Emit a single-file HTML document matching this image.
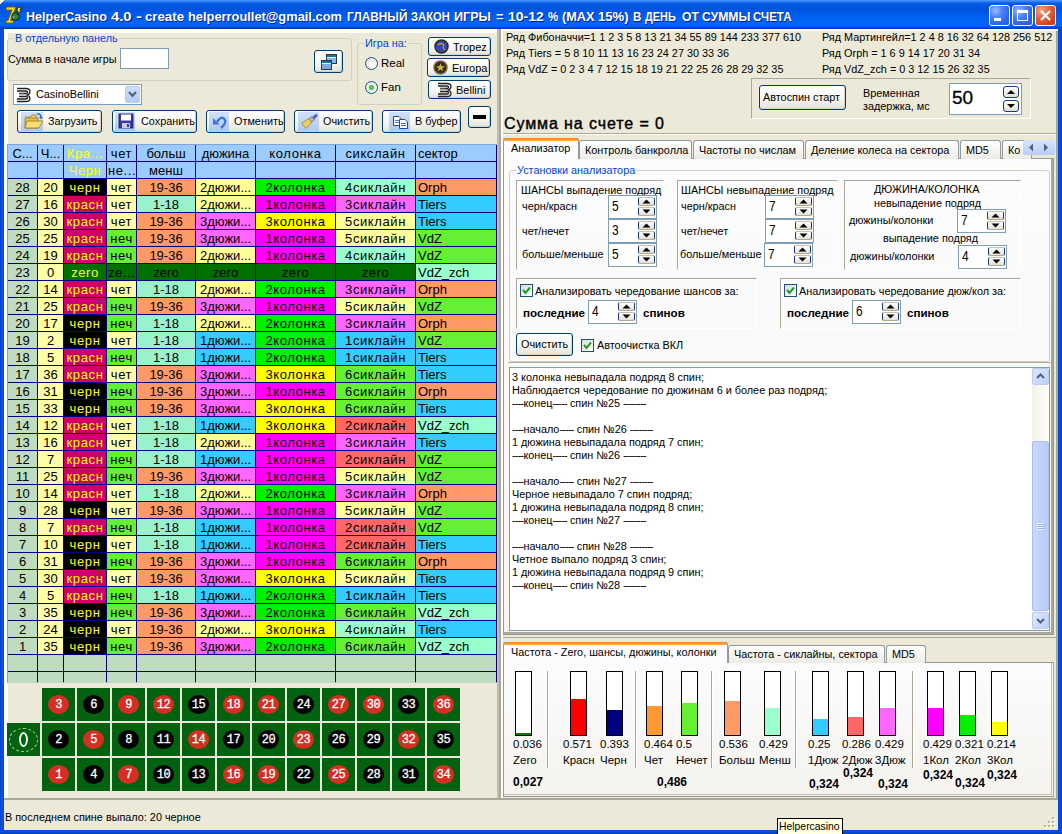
<!DOCTYPE html>
<html><head><meta charset="utf-8"><style>
*{box-sizing:border-box;margin:0;padding:0}
html,body{width:1062px;height:834px;overflow:hidden;background:#ECE9D8;font-family:"Liberation Sans",sans-serif;font-size:10.85px;color:#000}
.a{position:absolute}
.t{position:absolute;white-space:nowrap;line-height:13px}
.xpbtn{position:absolute;border:1px solid #003C74;border-radius:3px;background:linear-gradient(#FFFFFF 0%,#F5F4EF 60%,#E3E1D6 100%);box-shadow:inset -1px -1px 0 #D6D0C5}
.edit{position:absolute;border:1px solid #7F9DB9;background:#fff}
.grp{position:absolute;border:1px solid #D0D0BF;border-radius:3px}
.gl{position:absolute;white-space:nowrap;color:#0046D5;background:#ECE9D8;padding:0 1px;line-height:13px}
.spin{position:absolute;border:1px solid #7F9DB9;background:#fff}
.spin .n{position:absolute;left:3px;top:3px;font-size:14px;line-height:15px;transform:scaleX(0.85);transform-origin:0 0}
.sb{position:absolute;width:16px;height:8px;border:1px solid #1B3A80;border-top-color:#C8C0A8;border-bottom-color:#B0A890;border-radius:2px;background:linear-gradient(#FFFFFF,#E2E0D6)}
.sb i{position:absolute;left:4px;width:0;height:0;border-left:3px solid transparent;border-right:3px solid transparent}
.bevel{position:absolute;border-top:1px solid #ACA899;border-left:1px solid #ACA899;border-right:1px solid #fff;border-bottom:1px solid #fff}
.cb{position:absolute;width:13px;height:13px;border:1px solid #1C5180;background:linear-gradient(135deg,#DCDCD7,#FFFFFF)}
.g{position:absolute;overflow:hidden;white-space:nowrap;font-size:13px;line-height:16px;height:16px;padding-top:1px}
.ls{letter-spacing:0.6px}
.bar{position:absolute;width:17px;height:65px;border:1px solid #000;background:#fff}
.bar i{position:absolute;left:0;right:0;bottom:0}
.rc{position:absolute;width:33px;height:33px;background:#02620F}
.rc b{position:absolute;left:6px;top:7px;width:21px;height:19px;border-radius:50%;color:#fff;font-family:"Liberation Mono",monospace;font-size:12px;font-weight:normal;line-height:20px;text-align:center;letter-spacing:-0.5px;-webkit-text-stroke:0.3px #fff}
</style></head><body>
<div class="a" style="left:0;top:0;width:1062px;height:29px;background:linear-gradient(#4A98FF 0px,#3B8AF8 1px,#1668EE 2.5px,#0058E4 4px,#0053DA 8px,#0058E6 12px,#0061F2 18px,#0066F8 24px,#0062F2 26px,#0048D0 27.5px,#003AB8 29px)"></div>
<div class="a" style="left:0;top:0;width:6px;height:6px;background:linear-gradient(135deg,#fff 0,#fff 40%,transparent 41%)"></div>
<div class="a" style="left:0;top:29px;width:4px;height:805px;background:linear-gradient(90deg,#0032C0,#0054E3 1px,#0058EE 2px,#0047D6)"></div>
<div class="a" style="left:1058px;top:29px;width:4px;height:805px;background:linear-gradient(90deg,#0047D6,#0054E3 2px,#0040C0)"></div>
<div class="a" style="left:0;top:830px;width:1062px;height:4px;background:linear-gradient(#0047D6,#0054E3 2px,#0036B0)"></div>
<svg class="a" style="left:5px;top:5px" width="20" height="20" viewBox="0 0 20 20">
<path d="M1.5 2 H10.5 L10 4.5 L5.5 15.5 H8.5 L8 18 H1 L1.5 15.5 H3 L7 5 H1 Z" fill="#F2E010" stroke="#8A5A00" stroke-width="0.9"/>
<circle cx="10.5" cy="11.5" r="3.8" fill="#1E9030" stroke="#1A1A1A" stroke-width="1"/>
<path d="M7.5 11 L10 12 L8 14 Z" fill="#B0A0B0"/>
<path d="M13 2 L16.5 2.5 L14.8 5 L16.5 5.2 L12 9.5 L13.2 6.3 L11.6 6.2 Z" fill="#FFF000" stroke="#111" stroke-width="0.8"/>
</svg>
<div class="t" style="left:25.5px;top:8px;color:#fff;font-weight:bold;font-size:13.5px;line-height:17px;text-shadow:1px 1px 0 #0A1E8C;transform:scaleX(0.930);transform-origin:0 0">HelperCasino</div>
<div class="t" style="left:110.5px;top:8px;color:#fff;font-weight:bold;font-size:13.5px;line-height:17px;text-shadow:1px 1px 0 #0A1E8C;transform:scaleX(1.096);transform-origin:0 0">4.0</div>
<div class="t" style="left:135.5px;top:8px;color:#fff;font-weight:bold;font-size:13.5px;line-height:17px;text-shadow:1px 1px 0 #0A1E8C;transform:scaleX(1.299);transform-origin:0 0">-</div>
<div class="t" style="left:144.5px;top:8px;color:#fff;font-weight:bold;font-size:13.5px;line-height:17px;text-shadow:1px 1px 0 #0A1E8C;transform:scaleX(0.980);transform-origin:0 0">create</div>
<div class="t" style="left:187.5px;top:8px;color:#fff;font-weight:bold;font-size:13.5px;line-height:17px;text-shadow:1px 1px 0 #0A1E8C;transform:scaleX(0.952);transform-origin:0 0">helperroullet@gmail.com</div>
<div class="t" style="left:346.5px;top:8px;color:#fff;font-weight:bold;font-size:13.5px;line-height:17px;text-shadow:1px 1px 0 #0A1E8C;transform:scaleX(0.876);transform-origin:0 0">ГЛАВНЫЙ</div>
<div class="t" style="left:410.5px;top:8px;color:#fff;font-weight:bold;font-size:13.5px;line-height:17px;text-shadow:1px 1px 0 #0A1E8C;transform:scaleX(0.831);transform-origin:0 0">ЗАКОН</div>
<div class="t" style="left:454.0px;top:8px;color:#fff;font-weight:bold;font-size:13.5px;line-height:17px;text-shadow:1px 1px 0 #0A1E8C;transform:scaleX(0.933);transform-origin:0 0">ИГРЫ</div>
<div class="t" style="left:495.5px;top:8px;color:#fff;font-weight:bold;font-size:13.5px;line-height:17px;text-shadow:1px 1px 0 #0A1E8C;transform:scaleX(0.943);transform-origin:0 0">=</div>
<div class="t" style="left:507.5px;top:8px;color:#fff;font-weight:bold;font-size:13.5px;line-height:17px;text-shadow:1px 1px 0 #0A1E8C;transform:scaleX(1.037);transform-origin:0 0">10-12</div>
<div class="t" style="left:547.5px;top:8px;color:#fff;font-weight:bold;font-size:13.5px;line-height:17px;text-shadow:1px 1px 0 #0A1E8C;transform:scaleX(0.860);transform-origin:0 0">%</div>
<div class="t" style="left:561.5px;top:8px;color:#fff;font-weight:bold;font-size:13.5px;line-height:17px;text-shadow:1px 1px 0 #0A1E8C;transform:scaleX(0.944);transform-origin:0 0">(MAX</div>
<div class="t" style="left:597.5px;top:8px;color:#fff;font-weight:bold;font-size:13.5px;line-height:17px;text-shadow:1px 1px 0 #0A1E8C;transform:scaleX(0.972);transform-origin:0 0">15%)</div>
<div class="t" style="left:632.5px;top:8px;color:#fff;font-weight:bold;font-size:13.5px;line-height:17px;text-shadow:1px 1px 0 #0A1E8C;transform:scaleX(0.856);transform-origin:0 0">В</div>
<div class="t" style="left:644.5px;top:8px;color:#fff;font-weight:bold;font-size:13.5px;line-height:17px;text-shadow:1px 1px 0 #0A1E8C;transform:scaleX(0.808);transform-origin:0 0">ДЕНЬ</div>
<div class="t" style="left:681.5px;top:8px;color:#fff;font-weight:bold;font-size:13.5px;line-height:17px;text-shadow:1px 1px 0 #0A1E8C;transform:scaleX(0.899);transform-origin:0 0">ОТ</div>
<div class="t" style="left:702.0px;top:8px;color:#fff;font-weight:bold;font-size:13.5px;line-height:17px;text-shadow:1px 1px 0 #0A1E8C;transform:scaleX(0.902);transform-origin:0 0">СУММЫ</div>
<div class="t" style="left:753.2px;top:8px;color:#fff;font-weight:bold;font-size:13.5px;line-height:17px;text-shadow:1px 1px 0 #0A1E8C;transform:scaleX(0.855);transform-origin:0 0">СЧЕТА</div>
<div class="a" style="left:989px;top:5px;width:21px;height:21px;border:1px solid #fff;border-radius:3px;background:radial-gradient(circle at 30% 25%,#9CBAFF 0,#4C82F8 35%,#2E64EE 70%,#2656DC 100%)"><div class="a" style="left:4px;top:12px;width:7px;height:3px;background:#fff"></div></div>
<div class="a" style="left:1012px;top:5px;width:21px;height:21px;border:1px solid #fff;border-radius:3px;background:radial-gradient(circle at 30% 25%,#9CBAFF 0,#4C82F8 35%,#2E64EE 70%,#2656DC 100%)"><div class="a" style="left:4px;top:4px;width:11px;height:11px;border:1px solid #fff;border-top-width:3px"></div></div>
<div class="a" style="left:1035px;top:5px;width:21px;height:21px;border:1px solid #fff;border-radius:3px;background:radial-gradient(circle at 30% 25%,#F4A58C 0,#E86A45 35%,#D6461E 70%,#C23A14 100%)"><svg class="a" style="left:3px;top:3px" width="13" height="13"><path d="M2 2 L11 11 M11 2 L2 11" stroke="#fff" stroke-width="2.2"/></svg></div>
<div class="a" style="left:4px;top:29px;width:497px;height:4px;background:#fff"></div><div class="a" style="left:501px;top:29px;width:557px;height:2px;background:#fff"></div>
<div class="a" style="left:4px;top:800px;width:1054px;height:30px;background:#ECE9D8"></div>
<div class="t" style="left:5px;top:811px">В последнем спине выпало: 20 черное</div>
<svg class="a" style="left:1043px;top:816px" width="12" height="12"><rect x="10" y="10" width="2" height="2" fill="#fff"/><rect x="9" y="9" width="2" height="2" fill="#B8B4A2"/><rect x="6" y="10" width="2" height="2" fill="#fff"/><rect x="5" y="9" width="2" height="2" fill="#B8B4A2"/><rect x="2" y="10" width="2" height="2" fill="#fff"/><rect x="1" y="9" width="2" height="2" fill="#B8B4A2"/><rect x="10" y="6" width="2" height="2" fill="#fff"/><rect x="9" y="5" width="2" height="2" fill="#B8B4A2"/><rect x="6" y="6" width="2" height="2" fill="#fff"/><rect x="5" y="5" width="2" height="2" fill="#B8B4A2"/><rect x="10" y="2" width="2" height="2" fill="#fff"/><rect x="9" y="1" width="2" height="2" fill="#B8B4A2"/></svg>
<div class="a" style="left:777px;top:818px;width:66px;height:20px;background:#FFFFE1;border:1px solid #000"></div>
<div class="t" style="left:779px;top:820px;font-size:10.4px">Helpercasino</div>
<div class="a" style="left:4px;top:29px;width:4px;height:769px;background:#fff"></div>
<div class="grp" style="left:7px;top:38px;width:345px;height:43px"></div>
<div class="gl" style="left:14px;top:32px;background:linear-gradient(transparent 1px,#ECE9D8 1px)">В отдельную панель</div>
<div class="t" style="left:8px;top:53px">Сумма в начале игры</div>
<div class="edit" style="left:120px;top:48px;width:49px;height:21px"></div>
<div class="xpbtn" style="left:314px;top:50px;width:29px;height:23px"></div>
<svg class="a" style="left:320px;top:53px" width="20" height="18" viewBox="0 0 20 18"><rect x="6.5" y="1.5" width="10" height="9" fill="#8AB4E8" stroke="#283848"/><rect x="7" y="2" width="9" height="2" fill="#1474A8"/><rect x="7" y="4" width="9" height="1" fill="#E8F4FF"/><rect x="1.5" y="7.5" width="10" height="9" fill="#7AA8E4" stroke="#283848"/><rect x="2" y="8" width="9" height="2" fill="#1474A8"/><rect x="2" y="10" width="9" height="1" fill="#E8F4FF"/></svg>
<div class="edit" style="left:13px;top:84px;width:129px;height:21px"></div>
<div class="a" style="left:16px;top:87px"><svg width="16" height="16" viewBox="0 0 16 16"><path d="M1 1.5 H10 Q14 1.5 14 4.5 Q14 7 11 8 Q14 9 14 11.5 Q14 14.5 10 14.5 H1" fill="none" stroke="#222" stroke-width="1.3"/><path d="M1 4 H10 Q11.5 4 11.5 5 Q11.5 6.5 10 6.5 H3 M3 9.5 H10 Q11.5 9.5 11.5 11 Q11.5 12 10 12 H1" fill="none" stroke="#222" stroke-width="1.3"/><path d="M3 7 H8" stroke="#888" stroke-width="1"/></svg></div>
<div class="t" style="left:36px;top:88px">CasinoBellini</div>
<div class="a" style="left:125px;top:86px;width:15px;height:17px;border-radius:2px;background:linear-gradient(#CFDDFB,#B6CCF6);border:1px solid #B8CCF0"></div>
<svg class="a" style="left:128px;top:91px" width="9" height="7"><path d="M1 1 L4.5 5 L8 1" fill="none" stroke="#4D6185" stroke-width="2"/></svg>
<div class="grp" style="left:357px;top:43px;width:65px;height:62px"></div>
<div class="gl" style="left:364px;top:37px">Игра на:</div>
<div class="a" style="left:365px;top:57px;width:13px;height:13px;border-radius:50%;border:1px solid #1C5180;background:radial-gradient(circle at 65% 65%,#FFFFFF,#DCDCD7)"></div>
<div class="t" style="left:381px;top:57px;font-size:11.5px">Real</div>
<div class="a" style="left:365px;top:81px;width:13px;height:13px;border-radius:50%;border:1px solid #1C5180;background:radial-gradient(circle at 65% 65%,#FFFFFF,#DCDCD7)"></div>
<div class="a" style="left:369px;top:85px;width:5px;height:5px;border-radius:50%;background:radial-gradient(#5BE65B,#1E9A1E)"></div>
<div class="t" style="left:381px;top:81px;font-size:11.5px">Fan</div>
<div class="xpbtn" style="left:428px;top:37px;width:63px;height:19px"></div>
<div class="a" style="left:434px;top:39px"><svg width="15" height="15"><circle cx="7.5" cy="7.5" r="6.5" fill="#3848A8" stroke="#2A2A2A" stroke-width="1.5"/><path d="M4 6 Q7 3 10 6 Q8 9 11 11" fill="none" stroke="#B8A040" stroke-width="1.2"/></svg></div>
<div class="t" style="left:453px;top:41px;font-size:11px">Tropez</div>
<div class="xpbtn" style="left:427px;top:58px;width:63px;height:19px"></div>
<div class="a" style="left:433px;top:60px"><svg width="15" height="15"><circle cx="7.5" cy="7.5" r="6.5" fill="#2A2A2A" stroke="#8A6A20" stroke-width="1.5"/><path d="M7.5 3 L8.7 6.3 L12 6.3 L9.3 8.4 L10.3 11.6 L7.5 9.6 L4.7 11.6 L5.7 8.4 L3 6.3 L6.3 6.3 Z" fill="#D8B030"/></svg></div>
<div class="t" style="left:452px;top:62px;font-size:11px">Europa</div>
<div class="xpbtn" style="left:428px;top:80px;width:63px;height:19px"></div>
<div class="a" style="left:437px;top:82px"><svg width="16" height="16" viewBox="0 0 16 16"><path d="M1 1.5 H10 Q14 1.5 14 4.5 Q14 7 11 8 Q14 9 14 11.5 Q14 14.5 10 14.5 H1" fill="none" stroke="#222" stroke-width="1.3"/><path d="M1 4 H10 Q11.5 4 11.5 5 Q11.5 6.5 10 6.5 H3 M3 9.5 H10 Q11.5 9.5 11.5 11 Q11.5 12 10 12 H1" fill="none" stroke="#222" stroke-width="1.3"/><path d="M3 7 H8" stroke="#888" stroke-width="1"/></svg></div>
<div class="t" style="left:456px;top:84px;font-size:11px">Bellini</div>
<div class="xpbtn" style="left:17px;top:110px;width:85px;height:23px"></div>
<div class="a" style="left:21px;top:112px;width:22px;height:19px;background:linear-gradient(#D0E0F8,#B0C8F0)"></div>
<div class="a" style="left:24px;top:112px"><svg width="20" height="18" viewBox="0 0 20 18"><path d="M1 5 H7 L8 3 H12 L12 6" fill="#F0D070" stroke="#9A7A20" stroke-width="0.8"/><path d="M1 6 H14 V16 H1 Z" fill="#E8C04A" stroke="#9A7A20" stroke-width="0.8"/><path d="M3 9 H19 L15 16 H1 Z" fill="#F8DA78" stroke="#9A7A20" stroke-width="0.8"/><path d="M13 2 Q17 1 17 6" fill="none" stroke="#2A5CC8" stroke-width="1.3"/><path d="M15 5 L17 7 L19 5" fill="#2A5CC8"/></svg></div>
<div class="t" style="left:48px;top:115px">Загрузить</div>
<div class="xpbtn" style="left:112px;top:110px;width:85px;height:23px"></div>
<div class="a" style="left:115px;top:112px;width:20px;height:19px;background:linear-gradient(#D0E0F8,#B0C8F0)"></div>
<div class="a" style="left:117px;top:112px"><svg width="18" height="18" viewBox="0 0 18 18"><rect x="2" y="2" width="14" height="14" fill="#3A3AA0" stroke="#1A1A60" stroke-width="0.8"/><rect x="4" y="2.5" width="10" height="6" fill="#fff"/><rect x="5" y="11" width="8" height="5" fill="#C8C8D8"/><rect x="10" y="12" width="2" height="3" fill="#3A3AA0"/></svg></div>
<div class="t" style="left:141px;top:115px">Сохранить</div>
<div class="xpbtn" style="left:206px;top:110px;width:79px;height:23px"></div>
<div class="a" style="left:209px;top:112px;width:20px;height:19px;background:linear-gradient(#D0E0F8,#B0C8F0)"></div>
<div class="a" style="left:211px;top:112px"><svg width="18" height="18" viewBox="0 0 18 18"><path d="M6 10 Q10 3.5 13.5 7 Q16 11 10 16" fill="none" stroke="#3A74E0" stroke-width="2.4"/><path d="M2 6 L2 12.5 L8.5 12.5 Z" fill="#3A74E0"/></svg></div>
<div class="t" style="left:234px;top:115px">Отменить</div>
<div class="xpbtn" style="left:294px;top:110px;width:79px;height:23px"></div>
<div class="a" style="left:298px;top:112px;width:21px;height:19px;background:linear-gradient(#D0E0F8,#B0C8F0)"></div>
<div class="a" style="left:299px;top:112px"><svg width="20" height="18" viewBox="0 0 20 18"><path d="M17 3.5 L13.5 7" stroke="#5A5AD0" stroke-width="3" stroke-linecap="round"/><path d="M10 6.5 L13 4.5 L15.5 8 L12.5 10.5 Z" fill="#B8B8C8" stroke="#606070" stroke-width="0.6"/><path d="M2.5 11 L10 6.5 L12.5 10.5 L7 16.5 Z" fill="#E6D25A" stroke="#8A7A30" stroke-width="0.7"/></svg></div>
<div class="t" style="left:323px;top:115px">Очистить</div>
<div class="xpbtn" style="left:382px;top:110px;width:79px;height:23px"></div>
<div class="a" style="left:389px;top:112px;width:21px;height:19px;background:linear-gradient(#D0E0F8,#B0C8F0)"></div>
<div class="a" style="left:387px;top:112px"><svg width="22" height="18" viewBox="0 0 22 18"><path d="M6.5 4.5 H12 L14.5 7 V13.5 H6.5 Z" fill="#fff" stroke="#404858" stroke-width="1"/><path d="M8 8.5 H13 M8 10.5 H13" stroke="#4A80D0" stroke-width="1"/><path d="M12.5 7.5 H18 L20.5 10 V16.5 H12.5 Z" fill="#fff" stroke="#1A48B0" stroke-width="1"/><path d="M14 11.5 H19 M14 13.5 H19" stroke="#3A70D0" stroke-width="1.2"/></svg></div>
<div class="t" style="left:415px;top:115px">В буфер</div>
<div class="xpbtn" style="left:468px;top:106px;width:23px;height:22px"></div>
<div class="a" style="left:473px;top:115px;width:13px;height:4px;background:#000"></div>
<div class="a" style="left:7px;top:144px;width:491px;height:539px;background:#000080;border:1px solid #7FA4DB"></div>
<div class="g" style="left:8px;top:145px;width:29px;height:16px;background:#9CCCFF;color:#000;text-align:center;padding-left:0px;">С...</div>
<div class="g" style="left:38px;top:145px;width:25px;height:16px;background:#9CCCFF;color:#000;text-align:center;padding-left:0px;">Ч...</div>
<div class="g ls" style="left:64px;top:145px;width:42px;height:16px;background:#9CCCFF;color:#FFFF00;text-align:center;padding-left:0px;">Кра...</div>
<div class="g ls" style="left:107px;top:145px;width:29px;height:16px;background:#9CCCFF;color:#000;text-align:center;padding-left:0px;">чет</div>
<div class="g" style="left:137px;top:145px;width:58px;height:16px;background:#9CCCFF;color:#000;text-align:center;padding-left:0px;">больш</div>
<div class="g" style="left:196px;top:145px;width:59px;height:16px;background:#9CCCFF;color:#000;text-align:center;padding-left:0px;">дюжина</div>
<div class="g ls" style="left:256px;top:145px;width:79px;height:16px;background:#9CCCFF;color:#000;text-align:center;padding-left:0px;">колонка</div>
<div class="g ls" style="left:336px;top:145px;width:79px;height:16px;background:#9CCCFF;color:#000;text-align:center;padding-left:0px;">сикслайн</div>
<div class="g" style="left:416px;top:145px;width:80px;height:16px;background:#9CCCFF;color:#000;text-align:left;padding-left:2px;">сектор</div>
<div class="g" style="left:8px;top:162px;width:29px;height:16px;background:#9CCCFF;color:#000;text-align:center;padding-left:0px;"></div>
<div class="g" style="left:38px;top:162px;width:25px;height:16px;background:#9CCCFF;color:#000;text-align:center;padding-left:0px;"></div>
<div class="g ls" style="left:64px;top:162px;width:42px;height:16px;background:#9CCCFF;color:#FFFF00;text-align:center;padding-left:0px;">Черн</div>
<div class="g ls" style="left:107px;top:162px;width:29px;height:16px;background:#9CCCFF;color:#000;text-align:left;padding-left:1px;">не...</div>
<div class="g" style="left:137px;top:162px;width:58px;height:16px;background:#9CCCFF;color:#000;text-align:center;padding-left:0px;">менш</div>
<div class="g" style="left:196px;top:162px;width:59px;height:16px;background:#9CCCFF;color:#000;text-align:center;padding-left:0px;"></div>
<div class="g ls" style="left:256px;top:162px;width:79px;height:16px;background:#9CCCFF;color:#000;text-align:center;padding-left:0px;"></div>
<div class="g ls" style="left:336px;top:162px;width:79px;height:16px;background:#9CCCFF;color:#000;text-align:center;padding-left:0px;"></div>
<div class="g" style="left:416px;top:162px;width:80px;height:16px;background:#9CCCFF;color:#000;text-align:center;padding-left:0px;"></div>
<div class="g" style="left:8px;top:179px;width:29px;height:16px;background:#C0DCC0;color:#000;text-align:center;padding-left:0px;">28</div>
<div class="g" style="left:38px;top:179px;width:25px;height:16px;background:#FFFFA8;color:#000;text-align:center;padding-left:0px;">20</div>
<div class="g ls" style="left:64px;top:179px;width:42px;height:16px;background:#000000;color:#FFFF00;text-align:center;padding-left:0px;">черн</div>
<div class="g ls" style="left:107px;top:179px;width:29px;height:16px;background:#FFFFA8;color:#000;text-align:center;padding-left:0px;">чет</div>
<div class="g" style="left:137px;top:179px;width:58px;height:16px;background:#FF9966;color:#000;text-align:center;padding-left:0px;">19-36</div>
<div class="g" style="left:196px;top:179px;width:59px;height:16px;background:#FFFF99;color:#000;text-align:left;padding-left:4px;">2дюжи...</div>
<div class="g ls" style="left:256px;top:179px;width:79px;height:16px;background:#00F000;color:#000;text-align:center;padding-left:0px;">2колонка</div>
<div class="g ls" style="left:336px;top:179px;width:79px;height:16px;background:#99FFCC;color:#000;text-align:center;padding-left:0px;">4сиклайн</div>
<div class="g" style="left:416px;top:179px;width:80px;height:16px;background:#FF9966;color:#000;text-align:left;padding-left:2px;">Orph</div>
<div class="g" style="left:8px;top:196px;width:29px;height:16px;background:#C0DCC0;color:#000;text-align:center;padding-left:0px;">27</div>
<div class="g" style="left:38px;top:196px;width:25px;height:16px;background:#FFFFA8;color:#000;text-align:center;padding-left:0px;">16</div>
<div class="g ls" style="left:64px;top:196px;width:42px;height:16px;background:#CC0066;color:#FFFF00;text-align:center;padding-left:0px;">красн</div>
<div class="g ls" style="left:107px;top:196px;width:29px;height:16px;background:#FFFFA8;color:#000;text-align:center;padding-left:0px;">чет</div>
<div class="g" style="left:137px;top:196px;width:58px;height:16px;background:#99F2CC;color:#000;text-align:center;padding-left:0px;">1-18</div>
<div class="g" style="left:196px;top:196px;width:59px;height:16px;background:#FFFF99;color:#000;text-align:left;padding-left:4px;">2дюжи...</div>
<div class="g ls" style="left:256px;top:196px;width:79px;height:16px;background:#FF00FF;color:#000;text-align:center;padding-left:0px;">1колонка</div>
<div class="g ls" style="left:336px;top:196px;width:79px;height:16px;background:#FF66FF;color:#000;text-align:center;padding-left:0px;">3сиклайн</div>
<div class="g" style="left:416px;top:196px;width:80px;height:16px;background:#33CCFF;color:#000;text-align:left;padding-left:2px;">Tiers</div>
<div class="g" style="left:8px;top:213px;width:29px;height:16px;background:#C0DCC0;color:#000;text-align:center;padding-left:0px;">26</div>
<div class="g" style="left:38px;top:213px;width:25px;height:16px;background:#FFFFA8;color:#000;text-align:center;padding-left:0px;">30</div>
<div class="g ls" style="left:64px;top:213px;width:42px;height:16px;background:#CC0066;color:#FFFF00;text-align:center;padding-left:0px;">красн</div>
<div class="g ls" style="left:107px;top:213px;width:29px;height:16px;background:#FFFFA8;color:#000;text-align:center;padding-left:0px;">чет</div>
<div class="g" style="left:137px;top:213px;width:58px;height:16px;background:#FF9966;color:#000;text-align:center;padding-left:0px;">19-36</div>
<div class="g" style="left:196px;top:213px;width:59px;height:16px;background:#FF66FF;color:#000;text-align:left;padding-left:4px;">3дюжи...</div>
<div class="g ls" style="left:256px;top:213px;width:79px;height:16px;background:#FFFF00;color:#000;text-align:center;padding-left:0px;">3колонка</div>
<div class="g ls" style="left:336px;top:213px;width:79px;height:16px;background:#FFFF99;color:#000;text-align:center;padding-left:0px;">5сиклайн</div>
<div class="g" style="left:416px;top:213px;width:80px;height:16px;background:#33CCFF;color:#000;text-align:left;padding-left:2px;">Tiers</div>
<div class="g" style="left:8px;top:230px;width:29px;height:16px;background:#C0DCC0;color:#000;text-align:center;padding-left:0px;">25</div>
<div class="g" style="left:38px;top:230px;width:25px;height:16px;background:#FFFFA8;color:#000;text-align:center;padding-left:0px;">25</div>
<div class="g ls" style="left:64px;top:230px;width:42px;height:16px;background:#CC0066;color:#FFFF00;text-align:center;padding-left:0px;">красн</div>
<div class="g ls" style="left:107px;top:230px;width:29px;height:16px;background:#66F033;color:#000;text-align:center;padding-left:0px;">неч</div>
<div class="g" style="left:137px;top:230px;width:58px;height:16px;background:#FF9966;color:#000;text-align:center;padding-left:0px;">19-36</div>
<div class="g" style="left:196px;top:230px;width:59px;height:16px;background:#FF66FF;color:#000;text-align:left;padding-left:4px;">3дюжи...</div>
<div class="g ls" style="left:256px;top:230px;width:79px;height:16px;background:#FF00FF;color:#000;text-align:center;padding-left:0px;">1колонка</div>
<div class="g ls" style="left:336px;top:230px;width:79px;height:16px;background:#FFFF99;color:#000;text-align:center;padding-left:0px;">5сиклайн</div>
<div class="g" style="left:416px;top:230px;width:80px;height:16px;background:#66F033;color:#000;text-align:left;padding-left:2px;">VdZ</div>
<div class="g" style="left:8px;top:247px;width:29px;height:16px;background:#C0DCC0;color:#000;text-align:center;padding-left:0px;">24</div>
<div class="g" style="left:38px;top:247px;width:25px;height:16px;background:#FFFFA8;color:#000;text-align:center;padding-left:0px;">19</div>
<div class="g ls" style="left:64px;top:247px;width:42px;height:16px;background:#CC0066;color:#FFFF00;text-align:center;padding-left:0px;">красн</div>
<div class="g ls" style="left:107px;top:247px;width:29px;height:16px;background:#66F033;color:#000;text-align:center;padding-left:0px;">неч</div>
<div class="g" style="left:137px;top:247px;width:58px;height:16px;background:#FF9966;color:#000;text-align:center;padding-left:0px;">19-36</div>
<div class="g" style="left:196px;top:247px;width:59px;height:16px;background:#FFFF99;color:#000;text-align:left;padding-left:4px;">2дюжи...</div>
<div class="g ls" style="left:256px;top:247px;width:79px;height:16px;background:#FF00FF;color:#000;text-align:center;padding-left:0px;">1колонка</div>
<div class="g ls" style="left:336px;top:247px;width:79px;height:16px;background:#99FFCC;color:#000;text-align:center;padding-left:0px;">4сиклайн</div>
<div class="g" style="left:416px;top:247px;width:80px;height:16px;background:#66F033;color:#000;text-align:left;padding-left:2px;">VdZ</div>
<div class="g" style="left:8px;top:264px;width:29px;height:16px;background:#C0DCC0;color:#000;text-align:center;padding-left:0px;">23</div>
<div class="g" style="left:38px;top:264px;width:25px;height:16px;background:#FFFFA8;color:#000;text-align:center;padding-left:0px;">0</div>
<div class="g ls" style="left:64px;top:264px;width:42px;height:16px;background:#007000;color:#FFFF00;text-align:center;padding-left:0px;">zero</div>
<div class="g ls" style="left:107px;top:264px;width:29px;height:16px;background:#007000;color:#000;text-align:left;padding-left:1px;">ze...</div>
<div class="g" style="left:137px;top:264px;width:58px;height:16px;background:#007000;color:#000;text-align:center;padding-left:0px;">zero</div>
<div class="g" style="left:196px;top:264px;width:59px;height:16px;background:#007000;color:#000;text-align:center;padding-left:0px;">zero</div>
<div class="g ls" style="left:256px;top:264px;width:79px;height:16px;background:#007000;color:#000;text-align:center;padding-left:0px;">zero</div>
<div class="g ls" style="left:336px;top:264px;width:79px;height:16px;background:#007000;color:#000;text-align:center;padding-left:0px;">zero</div>
<div class="g" style="left:416px;top:264px;width:80px;height:16px;background:#99FFCC;color:#000;text-align:left;padding-left:2px;">VdZ_zch</div>
<div class="g" style="left:8px;top:281px;width:29px;height:16px;background:#C0DCC0;color:#000;text-align:center;padding-left:0px;">22</div>
<div class="g" style="left:38px;top:281px;width:25px;height:16px;background:#FFFFA8;color:#000;text-align:center;padding-left:0px;">14</div>
<div class="g ls" style="left:64px;top:281px;width:42px;height:16px;background:#CC0066;color:#FFFF00;text-align:center;padding-left:0px;">красн</div>
<div class="g ls" style="left:107px;top:281px;width:29px;height:16px;background:#FFFFA8;color:#000;text-align:center;padding-left:0px;">чет</div>
<div class="g" style="left:137px;top:281px;width:58px;height:16px;background:#99F2CC;color:#000;text-align:center;padding-left:0px;">1-18</div>
<div class="g" style="left:196px;top:281px;width:59px;height:16px;background:#FFFF99;color:#000;text-align:left;padding-left:4px;">2дюжи...</div>
<div class="g ls" style="left:256px;top:281px;width:79px;height:16px;background:#00F000;color:#000;text-align:center;padding-left:0px;">2колонка</div>
<div class="g ls" style="left:336px;top:281px;width:79px;height:16px;background:#FF66FF;color:#000;text-align:center;padding-left:0px;">3сиклайн</div>
<div class="g" style="left:416px;top:281px;width:80px;height:16px;background:#FF9966;color:#000;text-align:left;padding-left:2px;">Orph</div>
<div class="g" style="left:8px;top:298px;width:29px;height:16px;background:#C0DCC0;color:#000;text-align:center;padding-left:0px;">21</div>
<div class="g" style="left:38px;top:298px;width:25px;height:16px;background:#FFFFA8;color:#000;text-align:center;padding-left:0px;">25</div>
<div class="g ls" style="left:64px;top:298px;width:42px;height:16px;background:#CC0066;color:#FFFF00;text-align:center;padding-left:0px;">красн</div>
<div class="g ls" style="left:107px;top:298px;width:29px;height:16px;background:#66F033;color:#000;text-align:center;padding-left:0px;">неч</div>
<div class="g" style="left:137px;top:298px;width:58px;height:16px;background:#FF9966;color:#000;text-align:center;padding-left:0px;">19-36</div>
<div class="g" style="left:196px;top:298px;width:59px;height:16px;background:#FF66FF;color:#000;text-align:left;padding-left:4px;">3дюжи...</div>
<div class="g ls" style="left:256px;top:298px;width:79px;height:16px;background:#FF00FF;color:#000;text-align:center;padding-left:0px;">1колонка</div>
<div class="g ls" style="left:336px;top:298px;width:79px;height:16px;background:#FFFF99;color:#000;text-align:center;padding-left:0px;">5сиклайн</div>
<div class="g" style="left:416px;top:298px;width:80px;height:16px;background:#66F033;color:#000;text-align:left;padding-left:2px;">VdZ</div>
<div class="g" style="left:8px;top:315px;width:29px;height:16px;background:#C0DCC0;color:#000;text-align:center;padding-left:0px;">20</div>
<div class="g" style="left:38px;top:315px;width:25px;height:16px;background:#FFFFA8;color:#000;text-align:center;padding-left:0px;">17</div>
<div class="g ls" style="left:64px;top:315px;width:42px;height:16px;background:#000000;color:#FFFF00;text-align:center;padding-left:0px;">черн</div>
<div class="g ls" style="left:107px;top:315px;width:29px;height:16px;background:#66F033;color:#000;text-align:center;padding-left:0px;">неч</div>
<div class="g" style="left:137px;top:315px;width:58px;height:16px;background:#99F2CC;color:#000;text-align:center;padding-left:0px;">1-18</div>
<div class="g" style="left:196px;top:315px;width:59px;height:16px;background:#FFFF99;color:#000;text-align:left;padding-left:4px;">2дюжи...</div>
<div class="g ls" style="left:256px;top:315px;width:79px;height:16px;background:#00F000;color:#000;text-align:center;padding-left:0px;">2колонка</div>
<div class="g ls" style="left:336px;top:315px;width:79px;height:16px;background:#FF66FF;color:#000;text-align:center;padding-left:0px;">3сиклайн</div>
<div class="g" style="left:416px;top:315px;width:80px;height:16px;background:#FF9966;color:#000;text-align:left;padding-left:2px;">Orph</div>
<div class="g" style="left:8px;top:332px;width:29px;height:16px;background:#C0DCC0;color:#000;text-align:center;padding-left:0px;">19</div>
<div class="g" style="left:38px;top:332px;width:25px;height:16px;background:#FFFFA8;color:#000;text-align:center;padding-left:0px;">2</div>
<div class="g ls" style="left:64px;top:332px;width:42px;height:16px;background:#000000;color:#FFFF00;text-align:center;padding-left:0px;">черн</div>
<div class="g ls" style="left:107px;top:332px;width:29px;height:16px;background:#FFFFA8;color:#000;text-align:center;padding-left:0px;">чет</div>
<div class="g" style="left:137px;top:332px;width:58px;height:16px;background:#99F2CC;color:#000;text-align:center;padding-left:0px;">1-18</div>
<div class="g" style="left:196px;top:332px;width:59px;height:16px;background:#33CCFF;color:#000;text-align:left;padding-left:4px;">1дюжи...</div>
<div class="g ls" style="left:256px;top:332px;width:79px;height:16px;background:#00F000;color:#000;text-align:center;padding-left:0px;">2колонка</div>
<div class="g ls" style="left:336px;top:332px;width:79px;height:16px;background:#33CCFF;color:#000;text-align:center;padding-left:0px;">1сиклайн</div>
<div class="g" style="left:416px;top:332px;width:80px;height:16px;background:#66F033;color:#000;text-align:left;padding-left:2px;">VdZ</div>
<div class="g" style="left:8px;top:349px;width:29px;height:16px;background:#C0DCC0;color:#000;text-align:center;padding-left:0px;">18</div>
<div class="g" style="left:38px;top:349px;width:25px;height:16px;background:#FFFFA8;color:#000;text-align:center;padding-left:0px;">5</div>
<div class="g ls" style="left:64px;top:349px;width:42px;height:16px;background:#CC0066;color:#FFFF00;text-align:center;padding-left:0px;">красн</div>
<div class="g ls" style="left:107px;top:349px;width:29px;height:16px;background:#66F033;color:#000;text-align:center;padding-left:0px;">неч</div>
<div class="g" style="left:137px;top:349px;width:58px;height:16px;background:#99F2CC;color:#000;text-align:center;padding-left:0px;">1-18</div>
<div class="g" style="left:196px;top:349px;width:59px;height:16px;background:#33CCFF;color:#000;text-align:left;padding-left:4px;">1дюжи...</div>
<div class="g ls" style="left:256px;top:349px;width:79px;height:16px;background:#00F000;color:#000;text-align:center;padding-left:0px;">2колонка</div>
<div class="g ls" style="left:336px;top:349px;width:79px;height:16px;background:#33CCFF;color:#000;text-align:center;padding-left:0px;">1сиклайн</div>
<div class="g" style="left:416px;top:349px;width:80px;height:16px;background:#33CCFF;color:#000;text-align:left;padding-left:2px;">Tiers</div>
<div class="g" style="left:8px;top:366px;width:29px;height:16px;background:#C0DCC0;color:#000;text-align:center;padding-left:0px;">17</div>
<div class="g" style="left:38px;top:366px;width:25px;height:16px;background:#FFFFA8;color:#000;text-align:center;padding-left:0px;">36</div>
<div class="g ls" style="left:64px;top:366px;width:42px;height:16px;background:#CC0066;color:#FFFF00;text-align:center;padding-left:0px;">красн</div>
<div class="g ls" style="left:107px;top:366px;width:29px;height:16px;background:#FFFFA8;color:#000;text-align:center;padding-left:0px;">чет</div>
<div class="g" style="left:137px;top:366px;width:58px;height:16px;background:#FF9966;color:#000;text-align:center;padding-left:0px;">19-36</div>
<div class="g" style="left:196px;top:366px;width:59px;height:16px;background:#FF66FF;color:#000;text-align:left;padding-left:4px;">3дюжи...</div>
<div class="g ls" style="left:256px;top:366px;width:79px;height:16px;background:#FFFF00;color:#000;text-align:center;padding-left:0px;">3колонка</div>
<div class="g ls" style="left:336px;top:366px;width:79px;height:16px;background:#66F033;color:#000;text-align:center;padding-left:0px;">6сиклайн</div>
<div class="g" style="left:416px;top:366px;width:80px;height:16px;background:#33CCFF;color:#000;text-align:left;padding-left:2px;">Tiers</div>
<div class="g" style="left:8px;top:383px;width:29px;height:16px;background:#C0DCC0;color:#000;text-align:center;padding-left:0px;">16</div>
<div class="g" style="left:38px;top:383px;width:25px;height:16px;background:#FFFFA8;color:#000;text-align:center;padding-left:0px;">31</div>
<div class="g ls" style="left:64px;top:383px;width:42px;height:16px;background:#000000;color:#FFFF00;text-align:center;padding-left:0px;">черн</div>
<div class="g ls" style="left:107px;top:383px;width:29px;height:16px;background:#66F033;color:#000;text-align:center;padding-left:0px;">неч</div>
<div class="g" style="left:137px;top:383px;width:58px;height:16px;background:#FF9966;color:#000;text-align:center;padding-left:0px;">19-36</div>
<div class="g" style="left:196px;top:383px;width:59px;height:16px;background:#FF66FF;color:#000;text-align:left;padding-left:4px;">3дюжи...</div>
<div class="g ls" style="left:256px;top:383px;width:79px;height:16px;background:#FF00FF;color:#000;text-align:center;padding-left:0px;">1колонка</div>
<div class="g ls" style="left:336px;top:383px;width:79px;height:16px;background:#66F033;color:#000;text-align:center;padding-left:0px;">6сиклайн</div>
<div class="g" style="left:416px;top:383px;width:80px;height:16px;background:#FF9966;color:#000;text-align:left;padding-left:2px;">Orph</div>
<div class="g" style="left:8px;top:400px;width:29px;height:16px;background:#C0DCC0;color:#000;text-align:center;padding-left:0px;">15</div>
<div class="g" style="left:38px;top:400px;width:25px;height:16px;background:#FFFFA8;color:#000;text-align:center;padding-left:0px;">33</div>
<div class="g ls" style="left:64px;top:400px;width:42px;height:16px;background:#000000;color:#FFFF00;text-align:center;padding-left:0px;">черн</div>
<div class="g ls" style="left:107px;top:400px;width:29px;height:16px;background:#66F033;color:#000;text-align:center;padding-left:0px;">неч</div>
<div class="g" style="left:137px;top:400px;width:58px;height:16px;background:#FF9966;color:#000;text-align:center;padding-left:0px;">19-36</div>
<div class="g" style="left:196px;top:400px;width:59px;height:16px;background:#FF66FF;color:#000;text-align:left;padding-left:4px;">3дюжи...</div>
<div class="g ls" style="left:256px;top:400px;width:79px;height:16px;background:#FFFF00;color:#000;text-align:center;padding-left:0px;">3колонка</div>
<div class="g ls" style="left:336px;top:400px;width:79px;height:16px;background:#66F033;color:#000;text-align:center;padding-left:0px;">6сиклайн</div>
<div class="g" style="left:416px;top:400px;width:80px;height:16px;background:#33CCFF;color:#000;text-align:left;padding-left:2px;">Tiers</div>
<div class="g" style="left:8px;top:417px;width:29px;height:16px;background:#C0DCC0;color:#000;text-align:center;padding-left:0px;">14</div>
<div class="g" style="left:38px;top:417px;width:25px;height:16px;background:#FFFFA8;color:#000;text-align:center;padding-left:0px;">12</div>
<div class="g ls" style="left:64px;top:417px;width:42px;height:16px;background:#CC0066;color:#FFFF00;text-align:center;padding-left:0px;">красн</div>
<div class="g ls" style="left:107px;top:417px;width:29px;height:16px;background:#FFFFA8;color:#000;text-align:center;padding-left:0px;">чет</div>
<div class="g" style="left:137px;top:417px;width:58px;height:16px;background:#99F2CC;color:#000;text-align:center;padding-left:0px;">1-18</div>
<div class="g" style="left:196px;top:417px;width:59px;height:16px;background:#33CCFF;color:#000;text-align:left;padding-left:4px;">1дюжи...</div>
<div class="g ls" style="left:256px;top:417px;width:79px;height:16px;background:#FFFF00;color:#000;text-align:center;padding-left:0px;">3колонка</div>
<div class="g ls" style="left:336px;top:417px;width:79px;height:16px;background:#FF6666;color:#000;text-align:center;padding-left:0px;">2сиклайн</div>
<div class="g" style="left:416px;top:417px;width:80px;height:16px;background:#99FFCC;color:#000;text-align:left;padding-left:2px;">VdZ_zch</div>
<div class="g" style="left:8px;top:434px;width:29px;height:16px;background:#C0DCC0;color:#000;text-align:center;padding-left:0px;">13</div>
<div class="g" style="left:38px;top:434px;width:25px;height:16px;background:#FFFFA8;color:#000;text-align:center;padding-left:0px;">16</div>
<div class="g ls" style="left:64px;top:434px;width:42px;height:16px;background:#CC0066;color:#FFFF00;text-align:center;padding-left:0px;">красн</div>
<div class="g ls" style="left:107px;top:434px;width:29px;height:16px;background:#FFFFA8;color:#000;text-align:center;padding-left:0px;">чет</div>
<div class="g" style="left:137px;top:434px;width:58px;height:16px;background:#99F2CC;color:#000;text-align:center;padding-left:0px;">1-18</div>
<div class="g" style="left:196px;top:434px;width:59px;height:16px;background:#FFFF99;color:#000;text-align:left;padding-left:4px;">2дюжи...</div>
<div class="g ls" style="left:256px;top:434px;width:79px;height:16px;background:#FF00FF;color:#000;text-align:center;padding-left:0px;">1колонка</div>
<div class="g ls" style="left:336px;top:434px;width:79px;height:16px;background:#FF66FF;color:#000;text-align:center;padding-left:0px;">3сиклайн</div>
<div class="g" style="left:416px;top:434px;width:80px;height:16px;background:#33CCFF;color:#000;text-align:left;padding-left:2px;">Tiers</div>
<div class="g" style="left:8px;top:451px;width:29px;height:16px;background:#C0DCC0;color:#000;text-align:center;padding-left:0px;">12</div>
<div class="g" style="left:38px;top:451px;width:25px;height:16px;background:#FFFFA8;color:#000;text-align:center;padding-left:0px;">7</div>
<div class="g ls" style="left:64px;top:451px;width:42px;height:16px;background:#CC0066;color:#FFFF00;text-align:center;padding-left:0px;">красн</div>
<div class="g ls" style="left:107px;top:451px;width:29px;height:16px;background:#66F033;color:#000;text-align:center;padding-left:0px;">неч</div>
<div class="g" style="left:137px;top:451px;width:58px;height:16px;background:#99F2CC;color:#000;text-align:center;padding-left:0px;">1-18</div>
<div class="g" style="left:196px;top:451px;width:59px;height:16px;background:#33CCFF;color:#000;text-align:left;padding-left:4px;">1дюжи...</div>
<div class="g ls" style="left:256px;top:451px;width:79px;height:16px;background:#FF00FF;color:#000;text-align:center;padding-left:0px;">1колонка</div>
<div class="g ls" style="left:336px;top:451px;width:79px;height:16px;background:#FF6666;color:#000;text-align:center;padding-left:0px;">2сиклайн</div>
<div class="g" style="left:416px;top:451px;width:80px;height:16px;background:#66F033;color:#000;text-align:left;padding-left:2px;">VdZ</div>
<div class="g" style="left:8px;top:468px;width:29px;height:16px;background:#C0DCC0;color:#000;text-align:center;padding-left:0px;">11</div>
<div class="g" style="left:38px;top:468px;width:25px;height:16px;background:#FFFFA8;color:#000;text-align:center;padding-left:0px;">25</div>
<div class="g ls" style="left:64px;top:468px;width:42px;height:16px;background:#CC0066;color:#FFFF00;text-align:center;padding-left:0px;">красн</div>
<div class="g ls" style="left:107px;top:468px;width:29px;height:16px;background:#66F033;color:#000;text-align:center;padding-left:0px;">неч</div>
<div class="g" style="left:137px;top:468px;width:58px;height:16px;background:#FF9966;color:#000;text-align:center;padding-left:0px;">19-36</div>
<div class="g" style="left:196px;top:468px;width:59px;height:16px;background:#FF66FF;color:#000;text-align:left;padding-left:4px;">3дюжи...</div>
<div class="g ls" style="left:256px;top:468px;width:79px;height:16px;background:#FF00FF;color:#000;text-align:center;padding-left:0px;">1колонка</div>
<div class="g ls" style="left:336px;top:468px;width:79px;height:16px;background:#FFFF99;color:#000;text-align:center;padding-left:0px;">5сиклайн</div>
<div class="g" style="left:416px;top:468px;width:80px;height:16px;background:#66F033;color:#000;text-align:left;padding-left:2px;">VdZ</div>
<div class="g" style="left:8px;top:485px;width:29px;height:16px;background:#C0DCC0;color:#000;text-align:center;padding-left:0px;">10</div>
<div class="g" style="left:38px;top:485px;width:25px;height:16px;background:#FFFFA8;color:#000;text-align:center;padding-left:0px;">14</div>
<div class="g ls" style="left:64px;top:485px;width:42px;height:16px;background:#CC0066;color:#FFFF00;text-align:center;padding-left:0px;">красн</div>
<div class="g ls" style="left:107px;top:485px;width:29px;height:16px;background:#FFFFA8;color:#000;text-align:center;padding-left:0px;">чет</div>
<div class="g" style="left:137px;top:485px;width:58px;height:16px;background:#99F2CC;color:#000;text-align:center;padding-left:0px;">1-18</div>
<div class="g" style="left:196px;top:485px;width:59px;height:16px;background:#FFFF99;color:#000;text-align:left;padding-left:4px;">2дюжи...</div>
<div class="g ls" style="left:256px;top:485px;width:79px;height:16px;background:#00F000;color:#000;text-align:center;padding-left:0px;">2колонка</div>
<div class="g ls" style="left:336px;top:485px;width:79px;height:16px;background:#FF66FF;color:#000;text-align:center;padding-left:0px;">3сиклайн</div>
<div class="g" style="left:416px;top:485px;width:80px;height:16px;background:#FF9966;color:#000;text-align:left;padding-left:2px;">Orph</div>
<div class="g" style="left:8px;top:502px;width:29px;height:16px;background:#C0DCC0;color:#000;text-align:center;padding-left:0px;">9</div>
<div class="g" style="left:38px;top:502px;width:25px;height:16px;background:#FFFFA8;color:#000;text-align:center;padding-left:0px;">28</div>
<div class="g ls" style="left:64px;top:502px;width:42px;height:16px;background:#000000;color:#FFFF00;text-align:center;padding-left:0px;">черн</div>
<div class="g ls" style="left:107px;top:502px;width:29px;height:16px;background:#FFFFA8;color:#000;text-align:center;padding-left:0px;">чет</div>
<div class="g" style="left:137px;top:502px;width:58px;height:16px;background:#FF9966;color:#000;text-align:center;padding-left:0px;">19-36</div>
<div class="g" style="left:196px;top:502px;width:59px;height:16px;background:#FF66FF;color:#000;text-align:left;padding-left:4px;">3дюжи...</div>
<div class="g ls" style="left:256px;top:502px;width:79px;height:16px;background:#FF00FF;color:#000;text-align:center;padding-left:0px;">1колонка</div>
<div class="g ls" style="left:336px;top:502px;width:79px;height:16px;background:#FFFF99;color:#000;text-align:center;padding-left:0px;">5сиклайн</div>
<div class="g" style="left:416px;top:502px;width:80px;height:16px;background:#66F033;color:#000;text-align:left;padding-left:2px;">VdZ</div>
<div class="g" style="left:8px;top:519px;width:29px;height:16px;background:#C0DCC0;color:#000;text-align:center;padding-left:0px;">8</div>
<div class="g" style="left:38px;top:519px;width:25px;height:16px;background:#FFFFA8;color:#000;text-align:center;padding-left:0px;">7</div>
<div class="g ls" style="left:64px;top:519px;width:42px;height:16px;background:#CC0066;color:#FFFF00;text-align:center;padding-left:0px;">красн</div>
<div class="g ls" style="left:107px;top:519px;width:29px;height:16px;background:#66F033;color:#000;text-align:center;padding-left:0px;">неч</div>
<div class="g" style="left:137px;top:519px;width:58px;height:16px;background:#99F2CC;color:#000;text-align:center;padding-left:0px;">1-18</div>
<div class="g" style="left:196px;top:519px;width:59px;height:16px;background:#33CCFF;color:#000;text-align:left;padding-left:4px;">1дюжи...</div>
<div class="g ls" style="left:256px;top:519px;width:79px;height:16px;background:#FF00FF;color:#000;text-align:center;padding-left:0px;">1колонка</div>
<div class="g ls" style="left:336px;top:519px;width:79px;height:16px;background:#FF6666;color:#000;text-align:center;padding-left:0px;">2сиклайн</div>
<div class="g" style="left:416px;top:519px;width:80px;height:16px;background:#66F033;color:#000;text-align:left;padding-left:2px;">VdZ</div>
<div class="g" style="left:8px;top:536px;width:29px;height:16px;background:#C0DCC0;color:#000;text-align:center;padding-left:0px;">7</div>
<div class="g" style="left:38px;top:536px;width:25px;height:16px;background:#FFFFA8;color:#000;text-align:center;padding-left:0px;">10</div>
<div class="g ls" style="left:64px;top:536px;width:42px;height:16px;background:#000000;color:#FFFF00;text-align:center;padding-left:0px;">черн</div>
<div class="g ls" style="left:107px;top:536px;width:29px;height:16px;background:#FFFFA8;color:#000;text-align:center;padding-left:0px;">чет</div>
<div class="g" style="left:137px;top:536px;width:58px;height:16px;background:#99F2CC;color:#000;text-align:center;padding-left:0px;">1-18</div>
<div class="g" style="left:196px;top:536px;width:59px;height:16px;background:#33CCFF;color:#000;text-align:left;padding-left:4px;">1дюжи...</div>
<div class="g ls" style="left:256px;top:536px;width:79px;height:16px;background:#FF00FF;color:#000;text-align:center;padding-left:0px;">1колонка</div>
<div class="g ls" style="left:336px;top:536px;width:79px;height:16px;background:#FF6666;color:#000;text-align:center;padding-left:0px;">2сиклайн</div>
<div class="g" style="left:416px;top:536px;width:80px;height:16px;background:#33CCFF;color:#000;text-align:left;padding-left:2px;">Tiers</div>
<div class="g" style="left:8px;top:553px;width:29px;height:16px;background:#C0DCC0;color:#000;text-align:center;padding-left:0px;">6</div>
<div class="g" style="left:38px;top:553px;width:25px;height:16px;background:#FFFFA8;color:#000;text-align:center;padding-left:0px;">31</div>
<div class="g ls" style="left:64px;top:553px;width:42px;height:16px;background:#000000;color:#FFFF00;text-align:center;padding-left:0px;">черн</div>
<div class="g ls" style="left:107px;top:553px;width:29px;height:16px;background:#66F033;color:#000;text-align:center;padding-left:0px;">неч</div>
<div class="g" style="left:137px;top:553px;width:58px;height:16px;background:#FF9966;color:#000;text-align:center;padding-left:0px;">19-36</div>
<div class="g" style="left:196px;top:553px;width:59px;height:16px;background:#FF66FF;color:#000;text-align:left;padding-left:4px;">3дюжи...</div>
<div class="g ls" style="left:256px;top:553px;width:79px;height:16px;background:#FF00FF;color:#000;text-align:center;padding-left:0px;">1колонка</div>
<div class="g ls" style="left:336px;top:553px;width:79px;height:16px;background:#66F033;color:#000;text-align:center;padding-left:0px;">6сиклайн</div>
<div class="g" style="left:416px;top:553px;width:80px;height:16px;background:#FF9966;color:#000;text-align:left;padding-left:2px;">Orph</div>
<div class="g" style="left:8px;top:570px;width:29px;height:16px;background:#C0DCC0;color:#000;text-align:center;padding-left:0px;">5</div>
<div class="g" style="left:38px;top:570px;width:25px;height:16px;background:#FFFFA8;color:#000;text-align:center;padding-left:0px;">30</div>
<div class="g ls" style="left:64px;top:570px;width:42px;height:16px;background:#CC0066;color:#FFFF00;text-align:center;padding-left:0px;">красн</div>
<div class="g ls" style="left:107px;top:570px;width:29px;height:16px;background:#FFFFA8;color:#000;text-align:center;padding-left:0px;">чет</div>
<div class="g" style="left:137px;top:570px;width:58px;height:16px;background:#FF9966;color:#000;text-align:center;padding-left:0px;">19-36</div>
<div class="g" style="left:196px;top:570px;width:59px;height:16px;background:#FF66FF;color:#000;text-align:left;padding-left:4px;">3дюжи...</div>
<div class="g ls" style="left:256px;top:570px;width:79px;height:16px;background:#FFFF00;color:#000;text-align:center;padding-left:0px;">3колонка</div>
<div class="g ls" style="left:336px;top:570px;width:79px;height:16px;background:#FFFF99;color:#000;text-align:center;padding-left:0px;">5сиклайн</div>
<div class="g" style="left:416px;top:570px;width:80px;height:16px;background:#33CCFF;color:#000;text-align:left;padding-left:2px;">Tiers</div>
<div class="g" style="left:8px;top:587px;width:29px;height:16px;background:#C0DCC0;color:#000;text-align:center;padding-left:0px;">4</div>
<div class="g" style="left:38px;top:587px;width:25px;height:16px;background:#FFFFA8;color:#000;text-align:center;padding-left:0px;">5</div>
<div class="g ls" style="left:64px;top:587px;width:42px;height:16px;background:#CC0066;color:#FFFF00;text-align:center;padding-left:0px;">красн</div>
<div class="g ls" style="left:107px;top:587px;width:29px;height:16px;background:#66F033;color:#000;text-align:center;padding-left:0px;">неч</div>
<div class="g" style="left:137px;top:587px;width:58px;height:16px;background:#99F2CC;color:#000;text-align:center;padding-left:0px;">1-18</div>
<div class="g" style="left:196px;top:587px;width:59px;height:16px;background:#33CCFF;color:#000;text-align:left;padding-left:4px;">1дюжи...</div>
<div class="g ls" style="left:256px;top:587px;width:79px;height:16px;background:#00F000;color:#000;text-align:center;padding-left:0px;">2колонка</div>
<div class="g ls" style="left:336px;top:587px;width:79px;height:16px;background:#33CCFF;color:#000;text-align:center;padding-left:0px;">1сиклайн</div>
<div class="g" style="left:416px;top:587px;width:80px;height:16px;background:#33CCFF;color:#000;text-align:left;padding-left:2px;">Tiers</div>
<div class="g" style="left:8px;top:604px;width:29px;height:16px;background:#C0DCC0;color:#000;text-align:center;padding-left:0px;">3</div>
<div class="g" style="left:38px;top:604px;width:25px;height:16px;background:#FFFFA8;color:#000;text-align:center;padding-left:0px;">35</div>
<div class="g ls" style="left:64px;top:604px;width:42px;height:16px;background:#000000;color:#FFFF00;text-align:center;padding-left:0px;">черн</div>
<div class="g ls" style="left:107px;top:604px;width:29px;height:16px;background:#66F033;color:#000;text-align:center;padding-left:0px;">неч</div>
<div class="g" style="left:137px;top:604px;width:58px;height:16px;background:#FF9966;color:#000;text-align:center;padding-left:0px;">19-36</div>
<div class="g" style="left:196px;top:604px;width:59px;height:16px;background:#FF66FF;color:#000;text-align:left;padding-left:4px;">3дюжи...</div>
<div class="g ls" style="left:256px;top:604px;width:79px;height:16px;background:#00F000;color:#000;text-align:center;padding-left:0px;">2колонка</div>
<div class="g ls" style="left:336px;top:604px;width:79px;height:16px;background:#66F033;color:#000;text-align:center;padding-left:0px;">6сиклайн</div>
<div class="g" style="left:416px;top:604px;width:80px;height:16px;background:#99FFCC;color:#000;text-align:left;padding-left:2px;">VdZ_zch</div>
<div class="g" style="left:8px;top:621px;width:29px;height:16px;background:#C0DCC0;color:#000;text-align:center;padding-left:0px;">2</div>
<div class="g" style="left:38px;top:621px;width:25px;height:16px;background:#FFFFA8;color:#000;text-align:center;padding-left:0px;">24</div>
<div class="g ls" style="left:64px;top:621px;width:42px;height:16px;background:#000000;color:#FFFF00;text-align:center;padding-left:0px;">черн</div>
<div class="g ls" style="left:107px;top:621px;width:29px;height:16px;background:#FFFFA8;color:#000;text-align:center;padding-left:0px;">чет</div>
<div class="g" style="left:137px;top:621px;width:58px;height:16px;background:#FF9966;color:#000;text-align:center;padding-left:0px;">19-36</div>
<div class="g" style="left:196px;top:621px;width:59px;height:16px;background:#FFFF99;color:#000;text-align:left;padding-left:4px;">2дюжи...</div>
<div class="g ls" style="left:256px;top:621px;width:79px;height:16px;background:#FFFF00;color:#000;text-align:center;padding-left:0px;">3колонка</div>
<div class="g ls" style="left:336px;top:621px;width:79px;height:16px;background:#99FFCC;color:#000;text-align:center;padding-left:0px;">4сиклайн</div>
<div class="g" style="left:416px;top:621px;width:80px;height:16px;background:#33CCFF;color:#000;text-align:left;padding-left:2px;">Tiers</div>
<div class="g" style="left:8px;top:638px;width:29px;height:16px;background:#C0DCC0;color:#000;text-align:center;padding-left:0px;">1</div>
<div class="g" style="left:38px;top:638px;width:25px;height:16px;background:#FFFFA8;color:#000;text-align:center;padding-left:0px;">35</div>
<div class="g ls" style="left:64px;top:638px;width:42px;height:16px;background:#000000;color:#FFFF00;text-align:center;padding-left:0px;">черн</div>
<div class="g ls" style="left:107px;top:638px;width:29px;height:16px;background:#66F033;color:#000;text-align:center;padding-left:0px;">неч</div>
<div class="g" style="left:137px;top:638px;width:58px;height:16px;background:#FF9966;color:#000;text-align:center;padding-left:0px;">19-36</div>
<div class="g" style="left:196px;top:638px;width:59px;height:16px;background:#FF66FF;color:#000;text-align:left;padding-left:4px;">3дюжи...</div>
<div class="g ls" style="left:256px;top:638px;width:79px;height:16px;background:#00F000;color:#000;text-align:center;padding-left:0px;">2колонка</div>
<div class="g ls" style="left:336px;top:638px;width:79px;height:16px;background:#66F033;color:#000;text-align:center;padding-left:0px;">6сиклайн</div>
<div class="g" style="left:416px;top:638px;width:80px;height:16px;background:#99FFCC;color:#000;text-align:left;padding-left:2px;">VdZ_zch</div>
<div class="g" style="left:8px;top:655px;width:29px;height:16px;background:#C0DCC0;color:#000;text-align:center;padding-left:0px;"></div>
<div class="g" style="left:38px;top:655px;width:25px;height:16px;background:#C0DCC0;color:#000;text-align:center;padding-left:0px;"></div>
<div class="g ls" style="left:64px;top:655px;width:42px;height:16px;background:#C0DCC0;color:#000;text-align:center;padding-left:0px;"></div>
<div class="g ls" style="left:107px;top:655px;width:29px;height:16px;background:#C0DCC0;color:#000;text-align:center;padding-left:0px;"></div>
<div class="g" style="left:137px;top:655px;width:58px;height:16px;background:#C0DCC0;color:#000;text-align:center;padding-left:0px;"></div>
<div class="g" style="left:196px;top:655px;width:59px;height:16px;background:#C0DCC0;color:#000;text-align:center;padding-left:0px;"></div>
<div class="g ls" style="left:256px;top:655px;width:79px;height:16px;background:#C0DCC0;color:#000;text-align:center;padding-left:0px;"></div>
<div class="g ls" style="left:336px;top:655px;width:79px;height:16px;background:#C0DCC0;color:#000;text-align:center;padding-left:0px;"></div>
<div class="g" style="left:416px;top:655px;width:80px;height:16px;background:#C0DCC0;color:#000;text-align:center;padding-left:0px;"></div>
<div class="g" style="left:8px;top:672px;width:29px;height:11px;background:#C0DCC0;color:#000;text-align:center;padding-left:0px;"></div>
<div class="g" style="left:38px;top:672px;width:25px;height:11px;background:#C0DCC0;color:#000;text-align:center;padding-left:0px;"></div>
<div class="g ls" style="left:64px;top:672px;width:42px;height:11px;background:#C0DCC0;color:#000;text-align:center;padding-left:0px;"></div>
<div class="g ls" style="left:107px;top:672px;width:29px;height:11px;background:#C0DCC0;color:#000;text-align:center;padding-left:0px;"></div>
<div class="g" style="left:137px;top:672px;width:58px;height:11px;background:#C0DCC0;color:#000;text-align:center;padding-left:0px;"></div>
<div class="g" style="left:196px;top:672px;width:59px;height:11px;background:#C0DCC0;color:#000;text-align:center;padding-left:0px;"></div>
<div class="g ls" style="left:256px;top:672px;width:79px;height:11px;background:#C0DCC0;color:#000;text-align:center;padding-left:0px;"></div>
<div class="g ls" style="left:336px;top:672px;width:79px;height:11px;background:#C0DCC0;color:#000;text-align:center;padding-left:0px;"></div>
<div class="g" style="left:416px;top:672px;width:80px;height:11px;background:#C0DCC0;color:#000;text-align:center;padding-left:0px;"></div>
<div class="a" style="left:7px;top:723px;width:33px;height:33px;background:#02620F"></div>
<div class="a" style="left:9px;top:728px;width:29px;height:24px;border-radius:50%;border:1px dashed #A8D890"></div>
<div class="a" style="left:19px;top:732px;width:9px;height:15px;border:2px solid #E8F0E8;border-radius:50%"></div>
<div class="rc" style="left:42px;top:688px"><b style="background:#D62E22">3</b></div>
<div class="rc" style="left:42px;top:723px"><b style="background:#000">2</b></div>
<div class="rc" style="left:42px;top:758px"><b style="background:#D62E22">1</b></div>
<div class="rc" style="left:77px;top:688px"><b style="background:#000">6</b></div>
<div class="rc" style="left:77px;top:723px"><b style="background:#D62E22">5</b></div>
<div class="rc" style="left:77px;top:758px"><b style="background:#000">4</b></div>
<div class="rc" style="left:112px;top:688px"><b style="background:#D62E22">9</b></div>
<div class="rc" style="left:112px;top:723px"><b style="background:#000">8</b></div>
<div class="rc" style="left:112px;top:758px"><b style="background:#D62E22">7</b></div>
<div class="rc" style="left:147px;top:688px"><b style="background:#D62E22">12</b></div>
<div class="rc" style="left:147px;top:723px"><b style="background:#000">11</b></div>
<div class="rc" style="left:147px;top:758px"><b style="background:#000">10</b></div>
<div class="rc" style="left:182px;top:688px"><b style="background:#000">15</b></div>
<div class="rc" style="left:182px;top:723px"><b style="background:#D62E22">14</b></div>
<div class="rc" style="left:182px;top:758px"><b style="background:#000">13</b></div>
<div class="rc" style="left:217px;top:688px"><b style="background:#D62E22">18</b></div>
<div class="rc" style="left:217px;top:723px"><b style="background:#000">17</b></div>
<div class="rc" style="left:217px;top:758px"><b style="background:#D62E22">16</b></div>
<div class="rc" style="left:252px;top:688px"><b style="background:#D62E22">21</b></div>
<div class="rc" style="left:252px;top:723px"><b style="background:#000">20</b></div>
<div class="rc" style="left:252px;top:758px"><b style="background:#D62E22">19</b></div>
<div class="rc" style="left:287px;top:688px"><b style="background:#000">24</b></div>
<div class="rc" style="left:287px;top:723px"><b style="background:#D62E22">23</b></div>
<div class="rc" style="left:287px;top:758px"><b style="background:#000">22</b></div>
<div class="rc" style="left:322px;top:688px"><b style="background:#D62E22">27</b></div>
<div class="rc" style="left:322px;top:723px"><b style="background:#000">26</b></div>
<div class="rc" style="left:322px;top:758px"><b style="background:#D62E22">25</b></div>
<div class="rc" style="left:357px;top:688px"><b style="background:#D62E22">30</b></div>
<div class="rc" style="left:357px;top:723px"><b style="background:#000">29</b></div>
<div class="rc" style="left:357px;top:758px"><b style="background:#000">28</b></div>
<div class="rc" style="left:392px;top:688px"><b style="background:#000">33</b></div>
<div class="rc" style="left:392px;top:723px"><b style="background:#D62E22">32</b></div>
<div class="rc" style="left:392px;top:758px"><b style="background:#000">31</b></div>
<div class="rc" style="left:427px;top:688px"><b style="background:#D62E22">36</b></div>
<div class="rc" style="left:427px;top:723px"><b style="background:#000">35</b></div>
<div class="rc" style="left:427px;top:758px"><b style="background:#D62E22">34</b></div>
<div class="a" style="left:497px;top:29px;width:2px;height:771px;background:#C2BEAE"></div>
<div class="a" style="left:499px;top:29px;width:2px;height:771px;background:#ACA899"></div>
<div class="a" style="left:501px;top:31px;width:2px;height:769px;background:#fff"></div>
<div class="a" style="left:1056px;top:31px;width:2px;height:769px;background:#ACA899"></div>
<div class="a" style="left:4px;top:798px;width:1054px;height:2px;background:#ACA899"></div>
<div class="t" style="left:506px;top:31px">Ряд Фибоначчи=1 1 2 3 5 8 13 21 34 55 89 144 233 377 610</div>
<div class="t" style="left:506px;top:47px">Ряд Tiers = 5 8 10 11 13 16 23 24 27 30 33 36</div>
<div class="t" style="left:506px;top:63px">Ряд VdZ = 0 2 3 4 7 12 15 18 19 21 22 25 26 28 29 32 35</div>
<div class="t" style="left:822px;top:31px">Ряд Мартингейл=1 2 4 8 16 32 64 128 256 512</div>
<div class="t" style="left:822px;top:47px">Ряд Orph = 1 6 9 14 17 20 31 34</div>
<div class="t" style="left:822px;top:63px">Ряд VdZ_zch = 0 3 12 15 26 32 35</div>
<div class="bevel" style="left:751px;top:78px;width:280px;height:41px"></div>
<div class="xpbtn" style="left:759px;top:85px;width:87px;height:25px"></div>
<div class="t" style="left:763px;top:91px">Автоспин старт</div>
<div class="t" style="left:863px;top:87px">Временная</div>
<div class="t" style="left:863px;top:100px">задержка, мс</div>
<div class="edit" style="left:949px;top:83px;width:73px;height:32px"></div>
<div class="t" style="left:952px;top:88px;font-size:19px;line-height:20px;-webkit-text-stroke:0.3px #000">50</div>
<div class="sb" style="left:1003px;top:86px;width:16px;height:12px;border-color:#1B3A80;border-radius:3px;"></div>
<svg class="a" style="left:1003px;top:86px" width="16" height="12"><path d="M4.0 8.0 L8.0 4.0 L12.0 8.0 Z" fill="#000"/></svg>
<div class="sb" style="left:1003px;top:100px;width:16px;height:12px;border-color:#1B3A80;border-radius:3px;"></div>
<svg class="a" style="left:1003px;top:100px" width="16" height="12"><path d="M4.0 4.0 L8.0 8.0 L12.0 4.0 Z" fill="#000"/></svg>
<div class="t" style="left:504px;top:114px;font-size:16px;line-height:19px;letter-spacing:0.9px;-webkit-text-stroke:0.4px #000">Сумма на счете = 0</div>
<div class="a" style="left:503px;top:133px;width:553px;height:1px;background:#ACA899"></div>
<div class="a" style="left:503px;top:134px;width:553px;height:1px;background:#fff"></div>
<div class="a" style="left:503px;top:158px;width:551px;height:477px;border:1px solid #919B9C;background:linear-gradient(#FCFCFE,#F6F5F1)"></div>
<div class="a" style="left:1051px;top:159px;width:2px;height:475px;background:#ACA899"></div>
<div class="a" style="left:504px;top:632px;width:549px;height:2px;background:#ACA899"></div>
<div class="a" style="left:508px;top:362px;width:543px;height:1px;background:#ACA899"></div>
<div class="a" style="left:503px;top:637px;width:553px;height:1px;background:#ACA899"></div>
<div class="a" style="left:579px;top:140px;width:113px;height:19px;border:1px solid #919B9C;border-bottom:none;border-radius:3px 3px 0 0;background:linear-gradient(#FFFFFF,#ECEBE5)"></div>
<div class="t" style="left:585px;top:144px">Контроль банкролла</div>
<div class="a" style="left:693px;top:140px;width:111px;height:19px;border:1px solid #919B9C;border-bottom:none;border-radius:3px 3px 0 0;background:linear-gradient(#FFFFFF,#ECEBE5)"></div>
<div class="t" style="left:699px;top:144px">Частоты по числам</div>
<div class="a" style="left:805px;top:140px;width:154px;height:19px;border:1px solid #919B9C;border-bottom:none;border-radius:3px 3px 0 0;background:linear-gradient(#FFFFFF,#ECEBE5)"></div>
<div class="t" style="left:811px;top:144px">Деление колеса на сектора</div>
<div class="a" style="left:960px;top:140px;width:41px;height:19px;border:1px solid #919B9C;border-bottom:none;border-radius:3px 3px 0 0;background:linear-gradient(#FFFFFF,#ECEBE5)"></div>
<div class="t" style="left:966px;top:144px">MD5</div>
<div class="a" style="left:1002px;top:140px;width:30px;height:19px;border:1px solid #919B9C;border-bottom:none;border-radius:3px 3px 0 0;background:linear-gradient(#FFFFFF,#ECEBE5)"></div>
<div class="t" style="left:1008px;top:144px">Ко</div>
<div class="a" style="left:503px;top:138px;width:76px;height:21px;border:1px solid #919B9C;border-bottom:none;border-radius:3px 3px 0 0;background:#FCFCFE"></div>
<div class="a" style="left:503px;top:138px;width:76px;height:3px;border-radius:3px 3px 0 0;background:#F3A23C;border-top:1px solid #E68B2C"></div>
<div class="t" style="left:511px;top:142px">Анализатор</div>
<div class="a" style="left:1023px;top:140px;width:32px;height:15px;border-radius:2px;background:linear-gradient(#D6E3FB,#B8CEF6)"></div>
<svg class="a" style="left:1023px;top:140px" width="32" height="15"><path d="M6 7.5 L10 3.5 L10 11.5 Z M25 7.5 L21 3.5 L21 11.5 Z" fill="#4D6185"/></svg>
<div class="grp" style="left:509px;top:170px;width:541px;height:192px;border-color:#D0D0BF"></div>
<div class="gl" style="left:516px;top:164px;background:#FBFBFB">Установки анализатора</div>
<div class="bevel" style="left:516px;top:180px;width:148px;height:90px"></div>
<div class="t" style="left:521px;top:184px">ШАНСЫ выпадение подряд</div>
<div class="t" style="left:522px;top:200px">черн/красн</div>
<div class="t" style="left:522px;top:225px">чет/нечет</div>
<div class="t" style="left:522px;top:248px">больше/меньше</div>
<div class="spin" style="left:608px;top:195px;width:49px;height:24px"><span class="n">5</span></div>
<div class="sb" style="left:638px;top:197px;width:17px;height:9px;"></div>
<svg class="a" style="left:638px;top:197px" width="17" height="9"><path d="M4.5 6.5 L8.5 2.5 L12.5 6.5 Z" fill="#000"/></svg>
<div class="sb" style="left:638px;top:207px;width:17px;height:9px;"></div>
<svg class="a" style="left:638px;top:207px" width="17" height="9"><path d="M4.5 2.5 L8.5 6.5 L12.5 2.5 Z" fill="#000"/></svg>
<div class="spin" style="left:608px;top:219px;width:49px;height:24px"><span class="n">3</span></div>
<div class="sb" style="left:638px;top:221px;width:17px;height:9px;"></div>
<svg class="a" style="left:638px;top:221px" width="17" height="9"><path d="M4.5 6.5 L8.5 2.5 L12.5 6.5 Z" fill="#000"/></svg>
<div class="sb" style="left:638px;top:231px;width:17px;height:9px;"></div>
<svg class="a" style="left:638px;top:231px" width="17" height="9"><path d="M4.5 2.5 L8.5 6.5 L12.5 2.5 Z" fill="#000"/></svg>
<div class="spin" style="left:608px;top:243px;width:49px;height:24px"><span class="n">5</span></div>
<div class="sb" style="left:638px;top:245px;width:17px;height:9px;"></div>
<svg class="a" style="left:638px;top:245px" width="17" height="9"><path d="M4.5 6.5 L8.5 2.5 L12.5 6.5 Z" fill="#000"/></svg>
<div class="sb" style="left:638px;top:255px;width:17px;height:9px;"></div>
<svg class="a" style="left:638px;top:255px" width="17" height="9"><path d="M4.5 2.5 L8.5 6.5 L12.5 2.5 Z" fill="#000"/></svg>
<div class="bevel" style="left:677px;top:180px;width:161px;height:90px"></div>
<div class="t" style="left:681px;top:184px">ШАНСЫ невыпадение подряд</div>
<div class="t" style="left:681px;top:200px">черн/красн</div>
<div class="t" style="left:681px;top:225px">чет/нечет</div>
<div class="t" style="left:680px;top:248px">больше/меньше</div>
<div class="spin" style="left:765px;top:195px;width:49px;height:24px"><span class="n">7</span></div>
<div class="sb" style="left:795px;top:197px;width:17px;height:9px;"></div>
<svg class="a" style="left:795px;top:197px" width="17" height="9"><path d="M4.5 6.5 L8.5 2.5 L12.5 6.5 Z" fill="#000"/></svg>
<div class="sb" style="left:795px;top:207px;width:17px;height:9px;"></div>
<svg class="a" style="left:795px;top:207px" width="17" height="9"><path d="M4.5 2.5 L8.5 6.5 L12.5 2.5 Z" fill="#000"/></svg>
<div class="spin" style="left:765px;top:219px;width:49px;height:24px"><span class="n">7</span></div>
<div class="sb" style="left:795px;top:221px;width:17px;height:9px;"></div>
<svg class="a" style="left:795px;top:221px" width="17" height="9"><path d="M4.5 6.5 L8.5 2.5 L12.5 6.5 Z" fill="#000"/></svg>
<div class="sb" style="left:795px;top:231px;width:17px;height:9px;"></div>
<svg class="a" style="left:795px;top:231px" width="17" height="9"><path d="M4.5 2.5 L8.5 6.5 L12.5 2.5 Z" fill="#000"/></svg>
<div class="spin" style="left:764px;top:243px;width:49px;height:24px"><span class="n">7</span></div>
<div class="sb" style="left:794px;top:245px;width:17px;height:9px;"></div>
<svg class="a" style="left:794px;top:245px" width="17" height="9"><path d="M4.5 6.5 L8.5 2.5 L12.5 6.5 Z" fill="#000"/></svg>
<div class="sb" style="left:794px;top:255px;width:17px;height:9px;"></div>
<svg class="a" style="left:794px;top:255px" width="17" height="9"><path d="M4.5 2.5 L8.5 6.5 L12.5 2.5 Z" fill="#000"/></svg>
<div class="bevel" style="left:844px;top:180px;width:177px;height:90px"></div>
<div class="t" style="left:874px;top:183px">ДЮЖИНА/КОЛОНКА</div>
<div class="t" style="left:874px;top:197px">невыпадение подряд</div>
<div class="t" style="left:849px;top:214px">дюжины/колонки</div>
<div class="t" style="left:883px;top:232px">выпадение подряд</div>
<div class="t" style="left:850px;top:250px">дюжины/колонки</div>
<div class="spin" style="left:957px;top:209px;width:49px;height:24px"><span class="n">7</span></div>
<div class="sb" style="left:987px;top:211px;width:17px;height:9px;"></div>
<svg class="a" style="left:987px;top:211px" width="17" height="9"><path d="M4.5 6.5 L8.5 2.5 L12.5 6.5 Z" fill="#000"/></svg>
<div class="sb" style="left:987px;top:221px;width:17px;height:9px;"></div>
<svg class="a" style="left:987px;top:221px" width="17" height="9"><path d="M4.5 2.5 L8.5 6.5 L12.5 2.5 Z" fill="#000"/></svg>
<div class="spin" style="left:958px;top:245px;width:49px;height:24px"><span class="n">4</span></div>
<div class="sb" style="left:988px;top:247px;width:17px;height:9px;"></div>
<svg class="a" style="left:988px;top:247px" width="17" height="9"><path d="M4.5 6.5 L8.5 2.5 L12.5 6.5 Z" fill="#000"/></svg>
<div class="sb" style="left:988px;top:257px;width:17px;height:9px;"></div>
<svg class="a" style="left:988px;top:257px" width="17" height="9"><path d="M4.5 2.5 L8.5 6.5 L12.5 2.5 Z" fill="#000"/></svg>
<div class="bevel" style="left:516px;top:278px;width:241px;height:51px"></div>
<div class="cb" style="left:520px;top:284px"></div>
<svg class="a" style="left:520px;top:284px" width="13" height="13"><path d="M3 6 L5.5 9 L10 3.5" fill="none" stroke="#21A121" stroke-width="2"/></svg>
<div class="t" style="left:535px;top:285px">Анализировать чередование шансов за:</div>
<div class="t" style="left:523px;top:306px;font-weight:bold;font-size:11.6px">последние</div>
<div class="spin" style="left:588px;top:300px;width:49px;height:24px"><span class="n">4</span></div>
<div class="sb" style="left:618px;top:302px;width:17px;height:9px;"></div>
<svg class="a" style="left:618px;top:302px" width="17" height="9"><path d="M4.5 6.5 L8.5 2.5 L12.5 6.5 Z" fill="#000"/></svg>
<div class="sb" style="left:618px;top:312px;width:17px;height:9px;"></div>
<svg class="a" style="left:618px;top:312px" width="17" height="9"><path d="M4.5 2.5 L8.5 6.5 L12.5 2.5 Z" fill="#000"/></svg>
<div class="t" style="left:643px;top:306px;font-weight:bold;font-size:11.6px">спинов</div>
<div class="bevel" style="left:780px;top:278px;width:241px;height:51px"></div>
<div class="cb" style="left:784px;top:284px"></div>
<svg class="a" style="left:784px;top:284px" width="13" height="13"><path d="M3 6 L5.5 9 L10 3.5" fill="none" stroke="#21A121" stroke-width="2"/></svg>
<div class="t" style="left:799px;top:285px">Анализировать чередование дюж/кол за:</div>
<div class="t" style="left:787px;top:306px;font-weight:bold;font-size:11.6px">последние</div>
<div class="spin" style="left:852px;top:300px;width:49px;height:24px"><span class="n">6</span></div>
<div class="sb" style="left:882px;top:302px;width:17px;height:9px;"></div>
<svg class="a" style="left:882px;top:302px" width="17" height="9"><path d="M4.5 6.5 L8.5 2.5 L12.5 6.5 Z" fill="#000"/></svg>
<div class="sb" style="left:882px;top:312px;width:17px;height:9px;"></div>
<svg class="a" style="left:882px;top:312px" width="17" height="9"><path d="M4.5 2.5 L8.5 6.5 L12.5 2.5 Z" fill="#000"/></svg>
<div class="t" style="left:907px;top:306px;font-weight:bold;font-size:11.6px">спинов</div>
<div class="xpbtn" style="left:516px;top:333px;width:57px;height:23px"></div>
<div class="t" style="left:521px;top:338px">Очистить</div>
<div class="cb" style="left:581px;top:339px"></div>
<svg class="a" style="left:581px;top:339px" width="13" height="13"><path d="M3 6 L5.5 9 L10 3.5" fill="none" stroke="#21A121" stroke-width="2"/></svg>
<div class="t" style="left:597px;top:339px">Автоочистка ВКЛ</div>
<div class="a" style="left:509px;top:367px;width:541px;height:264px;border:1px solid #7F9DB9;background:#fff"></div>
<div class="t" style="left:512px;top:371px">3 колонка невыпадала подряд 8 спин;</div>
<div class="t" style="left:512px;top:384px">Наблюдается чередование по дюжинам 6 и более раз подряд;</div>
<div class="t" style="left:512px;top:397px"><span style="letter-spacing:-0.75px">----</span>конец<span style="letter-spacing:-0.75px">-----</span> спин №25 <span style="letter-spacing:-0.75px">--------</span></div>
<div class="t" style="left:512px;top:423px"><span style="letter-spacing:-0.75px">----</span>начало<span style="letter-spacing:-0.75px">-----</span> спин №26 <span style="letter-spacing:-0.75px">--------</span></div>
<div class="t" style="left:512px;top:436px">1 дюжина невыпадала подряд 7 спин;</div>
<div class="t" style="left:512px;top:449px"><span style="letter-spacing:-0.75px">----</span>конец<span style="letter-spacing:-0.75px">-----</span> спин №26 <span style="letter-spacing:-0.75px">--------</span></div>
<div class="t" style="left:512px;top:475px"><span style="letter-spacing:-0.75px">----</span>начало<span style="letter-spacing:-0.75px">-----</span> спин №27 <span style="letter-spacing:-0.75px">--------</span></div>
<div class="t" style="left:512px;top:488px">Черное невыпадало 7 спин подряд;</div>
<div class="t" style="left:512px;top:501px">1 дюжина невыпадала подряд 8 спин;</div>
<div class="t" style="left:512px;top:514px"><span style="letter-spacing:-0.75px">----</span>конец<span style="letter-spacing:-0.75px">-----</span> спин №27 <span style="letter-spacing:-0.75px">--------</span></div>
<div class="t" style="left:512px;top:540px"><span style="letter-spacing:-0.75px">----</span>начало<span style="letter-spacing:-0.75px">-----</span> спин №28 <span style="letter-spacing:-0.75px">--------</span></div>
<div class="t" style="left:512px;top:553px">Четное выпало подряд 3 спин;</div>
<div class="t" style="left:512px;top:566px">1 дюжина невыпадала подряд 9 спин;</div>
<div class="t" style="left:512px;top:579px"><span style="letter-spacing:-0.75px">----</span>конец<span style="letter-spacing:-0.75px">-----</span> спин №28 <span style="letter-spacing:-0.75px">--------</span></div>
<div class="a" style="left:1032px;top:368px;width:17px;height:262px;background:linear-gradient(90deg,#F3F1EC,#FEFEFB)"></div>
<div class="a" style="left:1032px;top:368px;width:17px;height:17px;border:1px solid #BBCBF0;border-radius:2px;background:linear-gradient(135deg,#E0E9FD,#BBD0F8)"></div>
<svg class="a" style="left:1032px;top:368px" width="17" height="17"><path d="M5 10 L8.5 6.5 L12 10" fill="none" stroke="#4D6185" stroke-width="2"/></svg>
<div class="a" style="left:1032px;top:441px;width:17px;height:170px;border:1px solid #A9BEF0;border-radius:2px;background:linear-gradient(90deg,#C9D8FC,#B8CCF8)"></div>
<svg class="a" style="left:1036px;top:522px" width="9" height="8"><path d="M1 1.5 H8 M1 3.5 H8 M1 5.5 H8 M1 7.5 H8" stroke="#EEF3FE" stroke-width="1"/><path d="M2 2.5 H9 M2 4.5 H9 M2 6.5 H9" stroke="#8CB0F8" stroke-width="1"/></svg>
<div class="a" style="left:1032px;top:612px;width:17px;height:17px;border:1px solid #BBCBF0;border-radius:2px;background:linear-gradient(135deg,#E0E9FD,#BBD0F8)"></div>
<svg class="a" style="left:1032px;top:612px" width="17" height="17"><path d="M5 7 L8.5 10.5 L12 7" fill="none" stroke="#4D6185" stroke-width="2"/></svg>
<div class="a" style="left:503px;top:662px;width:551px;height:135px;border:1px solid #919B9C;border-right-color:#A0A8AC;background:linear-gradient(#FCFCFE,#F4F3EE)"></div>
<div class="a" style="left:1051px;top:663px;width:1px;height:132px;background:#C4BFAE"></div>
<div class="a" style="left:504px;top:794px;width:548px;height:1px;background:#C4BFAE"></div>
<div class="a" style="left:728px;top:645px;width:157px;height:18px;border:1px solid #919B9C;border-bottom:none;border-radius:3px 3px 0 0;background:linear-gradient(#FFFFFF,#ECEBE5)"></div>
<div class="t" style="left:734px;top:648px">Частота - сиклайны, сектора</div>
<div class="a" style="left:886px;top:645px;width:40px;height:18px;border:1px solid #919B9C;border-bottom:none;border-radius:3px 3px 0 0;background:linear-gradient(#FFFFFF,#ECEBE5)"></div>
<div class="t" style="left:892px;top:648px">MD5</div>
<div class="a" style="left:503px;top:642px;width:225px;height:21px;border:1px solid #919B9C;border-bottom:none;border-radius:3px 3px 0 0;background:#FCFCFE"></div>
<div class="a" style="left:503px;top:642px;width:225px;height:3px;border-radius:3px 3px 0 0;background:#F3A23C;border-top:1px solid #E68B2C"></div>
<div class="t" style="left:511px;top:646px">Частота - Zero, шансы, дюжины, колонки</div>
<div class="bar" style="left:515px;top:671px"><i style="height:2px;background:#008000"></i></div>
<div class="t" style="left:513px;top:738px;font-size:11.5px">0.036</div>
<div class="t" style="left:513px;top:754px;font-size:11.5px">Zero</div>
<div class="t" style="left:513px;top:776px;font-weight:bold;font-size:12px">0,027</div>
<div class="bar" style="left:570px;top:671px"><i style="height:36px;background:#FF0000"></i></div>
<div class="t" style="left:563px;top:738px;font-size:11.5px">0.571</div>
<div class="t" style="left:563px;top:754px;font-size:11.5px">Красн</div>
<div class="bar" style="left:606px;top:671px"><i style="height:25px;background:#000080"></i></div>
<div class="t" style="left:600px;top:738px;font-size:11.5px">0.393</div>
<div class="t" style="left:600px;top:754px;font-size:11.5px">Черн</div>
<div class="bar" style="left:646px;top:671px"><i style="height:29px;background:#FF9933"></i></div>
<div class="t" style="left:644px;top:738px;font-size:11.5px">0.464</div>
<div class="t" style="left:644px;top:754px;font-size:11.5px">Чет</div>
<div class="bar" style="left:681px;top:671px"><i style="height:32px;background:#66F033"></i></div>
<div class="t" style="left:676px;top:738px;font-size:11.5px">0.5</div>
<div class="t" style="left:676px;top:754px;font-size:11.5px">Нечет</div>
<div class="t" style="left:657px;top:776px;font-weight:bold;font-size:12px">0,486</div>
<div class="bar" style="left:724px;top:671px"><i style="height:34px;background:#FF9966"></i></div>
<div class="t" style="left:719px;top:738px;font-size:11.5px">0.536</div>
<div class="t" style="left:719px;top:754px;font-size:11.5px">Больш</div>
<div class="bar" style="left:764px;top:671px"><i style="height:27px;background:#99FFCC"></i></div>
<div class="t" style="left:759px;top:738px;font-size:11.5px">0.429</div>
<div class="t" style="left:759px;top:754px;font-size:11.5px">Менш</div>
<div class="bar" style="left:812px;top:671px"><i style="height:16px;background:#33CCFF"></i></div>
<div class="t" style="left:808px;top:738px;font-size:11.5px">0.25</div>
<div class="t" style="left:808px;top:754px;font-size:11.5px">1Дюж</div>
<div class="t" style="left:809px;top:778px;font-weight:bold;font-size:12px">0,324</div>
<div class="bar" style="left:847px;top:671px"><i style="height:18px;background:#FF6666"></i></div>
<div class="t" style="left:842px;top:738px;font-size:11.5px">0.286</div>
<div class="t" style="left:842px;top:754px;font-size:11.5px">2Дюж</div>
<div class="t" style="left:843px;top:767px;font-weight:bold;font-size:12px">0,324</div>
<div class="bar" style="left:879px;top:671px"><i style="height:27px;background:#FF66FF"></i></div>
<div class="t" style="left:875px;top:738px;font-size:11.5px">0.429</div>
<div class="t" style="left:875px;top:754px;font-size:11.5px">3Дюж</div>
<div class="t" style="left:878px;top:778px;font-weight:bold;font-size:12px">0,324</div>
<div class="bar" style="left:927px;top:671px"><i style="height:27px;background:#FF00FF"></i></div>
<div class="t" style="left:923px;top:738px;font-size:11.5px">0.429</div>
<div class="t" style="left:923px;top:754px;font-size:11.5px">1Кол</div>
<div class="t" style="left:923px;top:769px;font-weight:bold;font-size:12px">0,324</div>
<div class="bar" style="left:959px;top:671px"><i style="height:20px;background:#00F000"></i></div>
<div class="t" style="left:955px;top:738px;font-size:11.5px">0.321</div>
<div class="t" style="left:955px;top:754px;font-size:11.5px">2Кол</div>
<div class="t" style="left:955px;top:777px;font-weight:bold;font-size:12px">0,324</div>
<div class="bar" style="left:991px;top:671px"><i style="height:13px;background:#FFFF00"></i></div>
<div class="t" style="left:987px;top:738px;font-size:11.5px">0.214</div>
<div class="t" style="left:987px;top:754px;font-size:11.5px">3Кол</div>
<div class="t" style="left:987px;top:769px;font-weight:bold;font-size:12px">0,324</div>
<div class="a" style="left:547px;top:671px;width:1px;height:97px;background:#ACA899"></div>
<div class="a" style="left:548px;top:671px;width:1px;height:97px;background:#fff"></div>
<div class="a" style="left:635px;top:671px;width:1px;height:97px;background:#ACA899"></div>
<div class="a" style="left:636px;top:671px;width:1px;height:97px;background:#fff"></div>
<div class="a" style="left:711px;top:671px;width:1px;height:97px;background:#ACA899"></div>
<div class="a" style="left:712px;top:671px;width:1px;height:97px;background:#fff"></div>
<div class="a" style="left:795px;top:671px;width:1px;height:97px;background:#ACA899"></div>
<div class="a" style="left:796px;top:671px;width:1px;height:97px;background:#fff"></div>
<div class="a" style="left:912px;top:671px;width:1px;height:97px;background:#ACA899"></div>
<div class="a" style="left:913px;top:671px;width:1px;height:97px;background:#fff"></div>
</body></html>
